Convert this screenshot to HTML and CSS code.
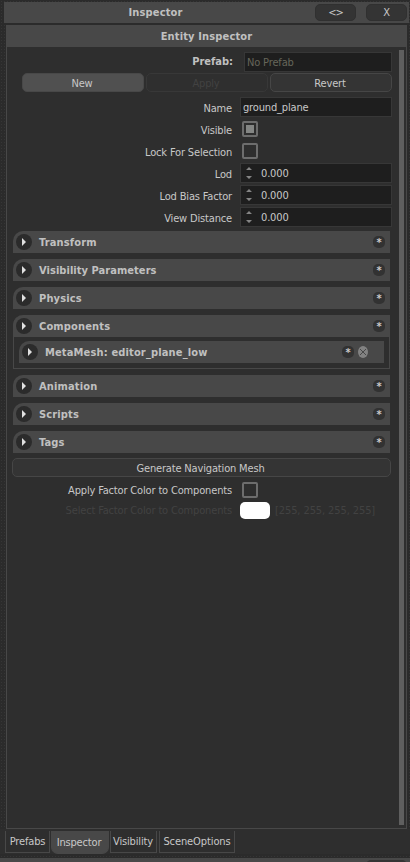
FILE: index.html
```html
<!DOCTYPE html>
<html lang="en">
<head>
<meta charset="utf-8">
<title>Inspector</title>
<link rel="stylesheet" href="styles.css">
</head>
<body>
<div class="window">
  <header class="titlebar">
    <h1 class="title">Inspector</h1>
    <button class="tool"><span class="t-swap">&lt;&gt;</span></button>
    <button class="tool"><span>X</span></button>
  </header>
  <main class="panel">
    <h2 class="panel-head"><span>Entity Inspector</span></h2>
    <div class="panel-body">
      <div class="content">
        <div class="prefab"><b class="prefab-label">Prefab:</b><div class="input muted">No Prefab</div></div>
        <div class="buttons">
          <button class="btn filled">New</button>
          <button class="btn disabled">Apply</button>
          <button class="btn">Revert</button>
        </div>
        <div class="form">
          <div class="row"><label>Name</label><div class="input">ground_plane</div></div>
          <div class="row"><label>Visible</label><i class="check on"></i></div>
          <div class="row"><label>Lock For Selection</label><i class="check"></i></div>
          <div class="row"><label>Lod</label><div class="input spin"><svg width="6" height="12" viewBox="0 0 6 12"><path d="M0 3h6L3 0zM0 9h6L3 12z"/></svg><span>0.000</span></div></div>
          <div class="row"><label>Lod Bias Factor</label><div class="input spin"><svg width="6" height="12" viewBox="0 0 6 12"><path d="M0 3h6L3 0zM0 9h6L3 12z"/></svg><span>0.000</span></div></div>
          <div class="row"><label>View Distance</label><div class="input spin"><svg width="6" height="12" viewBox="0 0 6 12"><path d="M0 3h6L3 0zM0 9h6L3 12z"/></svg><span>0.000</span></div></div>
        </div>
        <div class="sections">
          <div class="bar"><i class="arrow"></i><b>Transform</b><i class="star">*</i></div>
          <div class="bar"><i class="arrow"></i><b class="t-vis">Visibility Parameters</b><i class="star">*</i></div>
          <div class="bar"><i class="arrow"></i><b>Physics</b><i class="star">*</i></div>
          <div class="group">
            <div class="bar"><i class="arrow"></i><b>Components</b><i class="star">*</i></div>
            <div class="group-body">
              <div class="bar child"><i class="arrow"></i><b>MetaMesh: editor_plane_low</b><i class="star">*</i><svg class="remove" width="10" height="12" viewBox="0 0 10 12"><ellipse cx="5" cy="6" rx="5" ry="6"/><path d="M2 3l6 6M8 3L2 9"/></svg></div>
            </div>
          </div>
          <div class="bar"><i class="arrow"></i><b>Animation</b><i class="star">*</i></div>
          <div class="bar"><i class="arrow"></i><b>Scripts</b><i class="star">*</i></div>
          <div class="bar"><i class="arrow"></i><b>Tags</b><i class="star">*</i></div>
        </div>
        <button class="btn wide">Generate Navigation Mesh</button>
        <div class="factor"><label>Apply Factor Color to Components</label><i class="check"></i></div>
        <div class="factor dim"><label>Select Factor Color to Components</label><i class="swatch"></i><span>[255, 255, 255, 255]</span></div>
      </div>
      <div class="scrollbar"></div>
    </div>
  </main>
  <nav class="tabs">
    <a class="tab prefabs">Prefabs</a>
    <a class="tab active">Inspector</a>
    <a class="tab visibility">Visibility</a>
    <a class="tab scene">SceneOptions</a>
  </nav>
  <footer class="next"><i></i></footer>
</div>
</body>
</html>
```
FILE: styles.css
```css
* { box-sizing: border-box; }
body {
  margin: 0;
  background: #2e2e2e;
  color: #c8c8c8;
  font: 11px/14px "DejaVu Sans Condensed", "DejaVu Sans", sans-serif;
  font-stretch: condensed;
  letter-spacing: -0.16px;
}
b, h1, h2 { font-size: 11px; font-weight: bold; letter-spacing: 0.15px; color: #c0c0c0; }
i { font-style: normal; }
button { font: inherit; letter-spacing: inherit; color: inherit; padding: 0; }
.window {
  width: 410px;
  height: 862px;
  display: flex;
  flex-direction: column;
  padding-top: 2px;
  overflow: hidden;
  background: radial-gradient(#363636 35%, transparent 40%) 0 0 / 3px 3px, #2b2b2b;
}
.titlebar {
  flex: none;
  height: 21px;
  margin: 0 1px 2px 4px;
  padding-right: 2px;
  display: flex;
  align-items: center;
  gap: 10px;
  background: #484848;
}
.title { margin: 1px 0 0; width: 301px; padding-left: 2px; text-align: center; }
.tool {
  width: 41px;
  height: 17px;
  border: 1px solid #303030;
  border-radius: 5px;
  background: #343434;
  line-height: 16px;
}
.t-swap { letter-spacing: -1px; }
.panel {
  height: 804px;
  flex: none;
  margin: 0 3px 0 6px;
  border: 1px solid #484848;
  background: #2e2e2e;
}
.panel-head { margin: 0; height: 21px; line-height: 21px; text-align: center; background: #484848; }
.panel-body { display: flex; justify-content: space-between; padding: 3px 2px 0 5px; }
.scrollbar { width: 5px; height: 775px; background: #5f5f5f; }
.content { width: 380px; padding-top: 2px; }
.input { border: 1px solid #373737; background: #1e1e1e; height: 20px; line-height: 20px; padding-left: 2px; }
.prefab { display: flex; margin-left: 10px; height: 20px; align-items: center; }
.prefab-label { width: 211px; text-align: right; margin-right: 11px; letter-spacing: 0; }
.prefab .input { width: 148px; }
.muted { color: #66665a; }
.buttons { display: flex; gap: 2px; margin: 1px 0 5px 10px; }
.btn { flex: 1; height: 19px; border: 1px solid #464646; border-radius: 5px; background: #343434; line-height: 17px; padding: 1px 2px 0 0; }
.filled { background: #505050; border-color: #484848; }
.disabled { background: #2f2f2f; border-color: #383838; color: #424242; }
.row { height: 22px; display: flex; }
.row label { width: 220px; margin-right: 8px; text-align: right; line-height: 24px; }
.row .input { width: 152px; }
.check {
  width: 16px;
  height: 16px;
  margin: 2px;
  border: 2px solid #6d6d6d;
  border-radius: 2px;
  background: #2e2e2e;
  display: grid;
  place-items: center;
}
.on::before { content: ""; width: 8px; height: 8px; background: #848684; }
.row .spin { display: flex; align-items: center; gap: 9px; padding-left: 5px; }
.spin svg { fill: #858585; }
.spin span { padding-top: 2px; line-height: 18px; }
.sections { margin: 2px 2px 5px 1px; display: flex; flex-direction: column; gap: 6px; }
.bar { height: 22px; background: #484848; border-top-left-radius: 10px; display: flex; align-items: center; padding: 0 5px 0 3px; }
.bar b { margin-left: 7px; flex: 1; padding-top: 2px; }
.bar .t-vis { letter-spacing: 0.05px; }
.arrow { width: 16px; height: 16px; border-radius: 50%; background: #2b2b2b; display: grid; place-items: center; }
.arrow::before { content: ""; border: 4px solid transparent; border-left-color: #e0e0e0; border-right: 0; }
.star { width: 12px; height: 12px; border-radius: 5px; background: #323232; text-align: center; line-height: 13px; font-weight: bold; }
.group { height: 54px; border: 1px solid #484848; border-top: 0; border-top-left-radius: 10px; }
.group > .bar { margin: 0 -1px; }
.group-body { padding: 4px 5px; }
.child { padding-right: 16px; }
.remove { margin-left: 4px; fill: #828282; stroke: #484848; }
.remove ellipse { stroke: none; }
.wide { display: block; width: 379px; }
.factor { display: flex; align-items: center; height: 20px; margin-top: 3px; }
.factor label { width: 220px; margin-right: 8px; text-align: right; padding-top: 2px; }
.factor span { padding-top: 2px; letter-spacing: -0.1px; }
.dim { color: #424242; margin-top: 0; }
.swatch { width: 30px; height: 17px; border-radius: 5px; background: #fff; margin-right: 5px; }
.tabs { display: flex; height: 29px; flex: none; padding: 2px 0 0 5px; align-items: flex-start; background: linear-gradient(#2e2e2e 25px, transparent 25px); }
.tab { height: 22px; border: 1px solid #484848; border-top: 0; line-height: 22px; text-align: center; white-space: nowrap; }
.prefabs { width: 45px; }
.active { width: 58px; height: 23px; margin: 0 1px; padding-right: 2px; background: #484848; border-radius: 0 0 7px 7px; line-height: 24px; }
.visibility { width: 47px; padding-right: 1px; }
.scene { width: 76px; margin-left: 2px; letter-spacing: -0.1px; }
.next { flex: 1; min-height: 0; background: #484848; padding-top: 2px; }
.next i { display: block; width: 41px; height: 17px; margin-left: 366px; border-radius: 5px; background: #343434; }
```
